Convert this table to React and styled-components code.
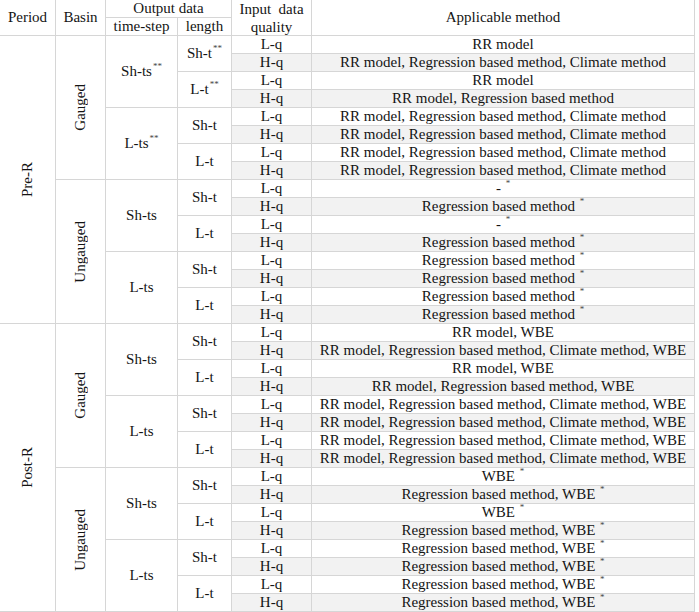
import React from "react";
import styled, { createGlobalStyle } from "styled-components";

const LINE = "#d6d6d6";
const SHADE = "#f2f2f2";

const W = { period: 56, basin: 50, step: 72, length: 54, quality: 80, method: 383 };

const GlobalStyle = createGlobalStyle`
  html, body { margin: 0; padding: 0; background: #fff; }
  body {
    font-family: "Liberation Serif", "Times New Roman", serif;
    color: #141414;
  }
`;

const Table = styled.div`
  width: ${W.period + W.basin + W.step + W.length + W.quality + W.method}px;
  display: flex;
  flex-direction: column;
  font-size: 15px;
  line-height: 17px;
`;

const Row = styled.div`
  display: flex;
  flex: none;
`;

const Stack = styled.div`
  display: flex;
  flex-direction: column;
  flex: 1 1 auto;
`;

const Cell = styled.div`
  box-sizing: border-box;
  flex: none;
  width: ${(p) => p.$w}px;
  height: ${(p) => (p.$h ? `${p.$h}px` : "auto")};
  display: flex;
  align-items: center;
  justify-content: center;
  text-align: center;
  white-space: nowrap;
  border-right: 1px solid ${LINE};
  border-bottom: 1px solid ${LINE};
  background: ${(p) => (p.$shade ? SHADE : "#fff")};
  line-height: ${(p) => (p.$lh ? `${p.$lh}px` : "17px")};
`;

const Vertical = styled.span`
  writing-mode: vertical-rl;
  transform: rotate(180deg);
  white-space: nowrap;
`;

const Sup = styled.sup`
  font-size: 0.6em;
  line-height: 0;
  vertical-align: baseline;
  position: relative;
  top: -0.62em;
  color: #444;
  margin-left: 1px;
`;

const HeaderGroup = styled.div`
  display: flex;
  flex-direction: column;
  flex: none;
`;

const Label = ({ name, sup }) => (
  <>
    {name}
    {sup && <Sup>{sup}</Sup>}
  </>
);

const Method = ({ text }) => {
  if (text.endsWith(" *")) {
    return (
      <>
        {text.slice(0, -2)}&nbsp;<Sup>*</Sup>
      </>
    );
  }
  return text;
};

const RCM = "RR model, Regression based method, Climate method";
const RCMW = "RR model, Regression based method, Climate method, WBE";
const REG = "Regression based method *";
const REGW = "Regression based method, WBE *";

const data = [
  {
    period: "Pre-R",
    basins: [
      {
        name: "Gauged",
        steps: [
          {
            name: "Sh-ts",
            sup: "**",
            lengths: [
              { name: "Sh-t", sup: "**", methods: ["RR model", RCM] },
              { name: "L-t", sup: "**", methods: ["RR model", "RR model, Regression based method"] },
            ],
          },
          {
            name: "L-ts",
            sup: "**",
            lengths: [
              { name: "Sh-t", methods: [RCM, RCM] },
              { name: "L-t", methods: [RCM, RCM] },
            ],
          },
        ],
      },
      {
        name: "Ungauged",
        steps: [
          {
            name: "Sh-ts",
            lengths: [
              { name: "Sh-t", methods: ["- *", REG] },
              { name: "L-t", methods: ["- *", REG] },
            ],
          },
          {
            name: "L-ts",
            lengths: [
              { name: "Sh-t", methods: [REG, REG] },
              { name: "L-t", methods: [REG, REG] },
            ],
          },
        ],
      },
    ],
  },
  {
    period: "Post-R",
    basins: [
      {
        name: "Gauged",
        steps: [
          {
            name: "Sh-ts",
            lengths: [
              { name: "Sh-t", methods: ["RR model, WBE", RCMW] },
              { name: "L-t", methods: ["RR model, WBE", "RR model, Regression based method, WBE"] },
            ],
          },
          {
            name: "L-ts",
            lengths: [
              { name: "Sh-t", methods: [RCMW, RCMW] },
              { name: "L-t", methods: [RCMW, RCMW] },
            ],
          },
        ],
      },
      {
        name: "Ungauged",
        steps: [
          {
            name: "Sh-ts",
            lengths: [
              { name: "Sh-t", methods: ["WBE *", REGW] },
              { name: "L-t", methods: ["WBE *", REGW] },
            ],
          },
          {
            name: "L-ts",
            lengths: [
              { name: "Sh-t", methods: [REGW, REGW] },
              { name: "L-t", methods: [REGW, REGW] },
            ],
          },
        ],
      },
    ],
  },
];

const QUALITY = ["L-q", "H-q"];

const Header = () => (
  <Row>
    <Cell $w={W.period} $h={36}>Period</Cell>
    <Cell $w={W.basin} $h={36}>Basin</Cell>
    <HeaderGroup>
      <Cell $w={W.step + W.length} $h={18}>Output data</Cell>
      <Row>
        <Cell $w={W.step} $h={18}>time-step</Cell>
        <Cell $w={W.length} $h={18}>length</Cell>
      </Row>
    </HeaderGroup>
    <Cell $w={W.quality} $h={36} $lh={18}>
      Input&nbsp; data
      <br />
      quality
    </Cell>
    <Cell $w={W.method} $h={36}>Applicable method</Cell>
  </Row>
);

export default function App() {
  return (
    <>
      <GlobalStyle />
      <Table>
        <Header />
        {data.map((p) => (
          <Row key={p.period}>
            <Cell $w={W.period}>
              <Vertical>{p.period}</Vertical>
            </Cell>
            <Stack>
              {p.basins.map((b) => (
                <Row key={b.name}>
                  <Cell $w={W.basin}>
                    <Vertical>{b.name}</Vertical>
                  </Cell>
                  <Stack>
                    {b.steps.map((s) => (
                      <Row key={s.name}>
                        <Cell $w={W.step}>
                          <Label name={s.name} sup={s.sup} />
                        </Cell>
                        <Stack>
                          {s.lengths.map((l) => (
                            <Row key={l.name}>
                              <Cell $w={W.length}>
                                <Label name={l.name} sup={l.sup} />
                              </Cell>
                              <Stack>
                                {l.methods.map((m, i) => (
                                  <Row key={i}>
                                    <Cell $w={W.quality} $h={18} $shade={i === 1}>
                                      {QUALITY[i]}
                                    </Cell>
                                    <Cell $w={W.method} $h={18} $shade={i === 1}>
                                      <Method text={m} />
                                    </Cell>
                                  </Row>
                                ))}
                              </Stack>
                            </Row>
                          ))}
                        </Stack>
                      </Row>
                    ))}
                  </Stack>
                </Row>
              ))}
            </Stack>
          </Row>
        ))}
      </Table>
    </>
  );
}
